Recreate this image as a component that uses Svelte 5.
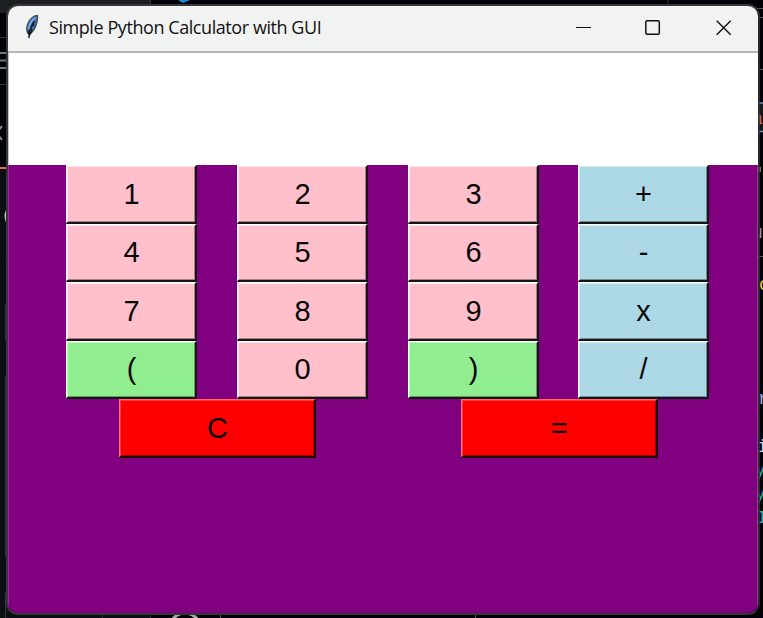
<script>
  const rows = [
    ['1', '2', '3', '+'],
    ['4', '5', '6', '-'],
    ['7', '8', '9', 'x'],
    ['(', '0', ')', '/'],
  ];
  function tone(key) {
    if (key === '(' || key === ')') return 'green';
    return '+-x/'.includes(key) ? 'blue' : 'pink';
  }
</script>

<div class="desktop">
  <svg class="backdrop" width="763" height="618" viewBox="0 0 763 618" aria-hidden="true">
    <rect width="763" height="618" fill="#020308" />
    <rect width="150" height="13" fill="#1d2023" />
    <rect y="169" width="150" height="449" fill="#0b0f13" />
    <path d="M150.5 0V6M0 37.5H8M0 84.5H8" stroke="#34373b" />
    <path d="M178 0h12l-7 3z" fill="#168bdc" />
    <path d="M667.5 0q0 5 4 6" stroke="#333" fill="none" />
    <path d="M0 53H8M0 60.5H8M0 68H8" stroke="#737780" stroke-width="2" />
    <path d="M2 126l-3 4M-1 136l3 4" stroke="#8a8a8a" stroke-width="2" />
    <path d="M0 168H8" stroke="#e06c4c" stroke-width="2" />
    <circle cx="17" cy="216" r="12.500" fill="#b8b8b8" />
    <path d="M5 262.5H8M8 301q-2.500 2-2.500 6v31q0 4 3 6M8 373q-2.500 2-2.500 6v175q0 4 3 7M5.500 618v-24q0-3 3-5" stroke="#33363a" fill="none" />
    <path d="M102.500 613v5M150.500 613v5" stroke="#2c2f33" />
    <path d="M220.500 613v5M475.500 613v5" stroke="#55585c" />
    <circle cx="185" cy="628" r="15" fill="none" stroke="#aaa" stroke-width="3" />
    <path d="M755 8.500h8M755 17.500h8M755 69.500h8M755 256.500h8" stroke="#555a60" />
    <rect x="758" y="103" width="5" height="28" fill="#16191b" />
    <path d="M757 103h6M757 131.500h6" stroke="#6097c5" stroke-width="1.500" />
    <rect x="758" y="167" width="3" height="5" fill="#77764b" />
    <g font-family="Liberation Mono, monospace" font-size="18">
      <text x="752" y="124" fill="#d87965">a</text>
      <text x="752" y="238" fill="#a58dcc">u</text>
      <text x="759" y="290" fill="#e6c34c">o</text>
      <text x="758" y="404" fill="#aaa2db">r</text>
      <text x="757" y="452" fill="#d4d4e8">i</text>
      <text x="755" y="475" fill="#29aeb3">y</text>
      <text x="755" y="499" fill="#29aeb3">y</text>
      <text x="757" y="523" fill="#29aeb3">I</text>
    </g>
  </svg>

  <div class="window">
    <header>
      <svg class="feather" width="16" height="26" viewBox="0 0 16 26" aria-hidden="true">
        <path d="M13.500 1.500C9 1.500 4.500 6 3.300 11c-.9 4-.6 7 .7 8.500l1 .5c4-2 7-7 8-12 .5-2.500.8-5 .5-6.500z" fill="#3f73b5" stroke="#4b5157" stroke-width="1.300" />
        <path d="M11.500 3.500C8 6 5.500 10 4.700 15" stroke="#75abe8" stroke-width="2" fill="none" />
        <path d="M10.500 7L7 13l-1.700 6-.3 5M10.500 11l-3 1M8.500 15.500L6 16M4 17l1.500 4L8 17" stroke="#111820" stroke-width="1.500" fill="none" />
      </svg>
      <h1>Simple Python Calculator with GUI</h1>
      <div class="controls">
        <svg width="16" height="16" viewBox="0 0 16 16"><path d="M0 7.500h15" stroke="#111" /></svg>
        <svg width="16" height="16" viewBox="0 0 16 16"><rect x=".8" y=".8" width="13.500" height="13.500" rx="1.500" fill="none" stroke="#111" stroke-width="1.500" /></svg>
        <svg width="16" height="16" viewBox="0 0 16 16"><path d="M.7.700l14 14m0-14l-14 14" stroke="#111" stroke-width="1.400" /></svg>
      </div>
    </header>
    <div class="display"></div>
    <main>
      <div class="keys">
        {#each rows as row}
          {#each row as key}
            <button class={tone(key)}>{key}</button>
          {/each}
        {/each}
      </div>
      <div class="actions">
        <button class="red">C</button>
        <button class="red">=</button>
      </div>
    </main>
  </div>
</div>

<style>
  .desktop {
    position: relative;
    box-sizing: border-box;
    width: 763px;
    height: 618px;
    padding: 4px 0 0 6px;
    overflow: hidden;
  }
  .backdrop {
    position: absolute;
    inset: 0;
  }
  .window {
    position: relative;
    box-sizing: border-box;
    width: 754px;
    height: 611px;
    border: 2px solid #37363b;
    border-right-color: rgba(50, 50, 54, 0.8);
    border-radius: 12px;
    overflow: hidden;
    display: flex;
    flex-direction: column;
  }
  header {
    box-sizing: border-box;
    height: 47px;
    flex: none;
    display: flex;
    align-items: flex-start;
    background: #f1f3f2;
    border-bottom: 2px solid #b8b8b8;
    padding-left: 16px;
  }
  .feather {
    margin-top: 8px;
  }
  h1 {
    margin: 8px 0 0 9px;
    font: 400 18px/26px "Open Sans", "Noto Sans", sans-serif;
    letter-spacing: -0.43px;
    color: #111;
    white-space: nowrap;
  }
  .controls {
    display: flex;
    gap: 54px;
    margin: 14px 26px 0 auto;
  }
  .controls svg:nth-child(2) {
    margin: 0 1px 0 -1px;
  }
  .display {
    height: 112px;
    flex: none;
    background: #fff;
    box-shadow: inset 1px 0 #c5c5c5;
  }
  main {
    flex: 1;
    background: #800080;
    box-shadow: inset 1px 0 #a02aa0, inset -1px 0 #9a3a9a;
  }
  .keys {
    display: grid;
    grid-template-columns: 171px 171px 170px 131px;
    grid-auto-rows: 58.500px;
    padding-left: 58px;
  }
  .keys button {
    width: 131px;
  }
  .actions {
    display: flex;
    gap: 145px;
    padding-left: 111px;
  }
  button {
    box-sizing: border-box;
    margin: 0;
    padding: 1px 0 0 1px;
    border: solid;
    border-width: 1px 2px 2px 1px;
    border-color: #fff #151515 #151515 #fff;
    border-radius: 0;
    font: 29px/1 "Liberation Sans", Arial, sans-serif;
    color: #080808;
  }
  .pink {
    background: #ffc0cb;
    box-shadow: inset 1px 1px #ffe5e9, inset -1px -1px #a67d84;
  }
  .green {
    background: #90ee90;
    box-shadow: inset 1px 1px #c0f6c0, inset -1px -1px #5e9b5e;
  }
  .blue {
    background: #add8e6;
    box-shadow: inset 1px 1px #d5ebf2, inset -1px -1px #708c96;
  }
  .red {
    width: 197px;
    height: 59px;
    padding-top: 0;
    background: #f00;
    border-color: #ff6969 #1b0000 #1b0000 #ff7b7b;
    box-shadow: inset 1px 1px #ff3838, inset -1px -1px #a60000;
  }
</style>
